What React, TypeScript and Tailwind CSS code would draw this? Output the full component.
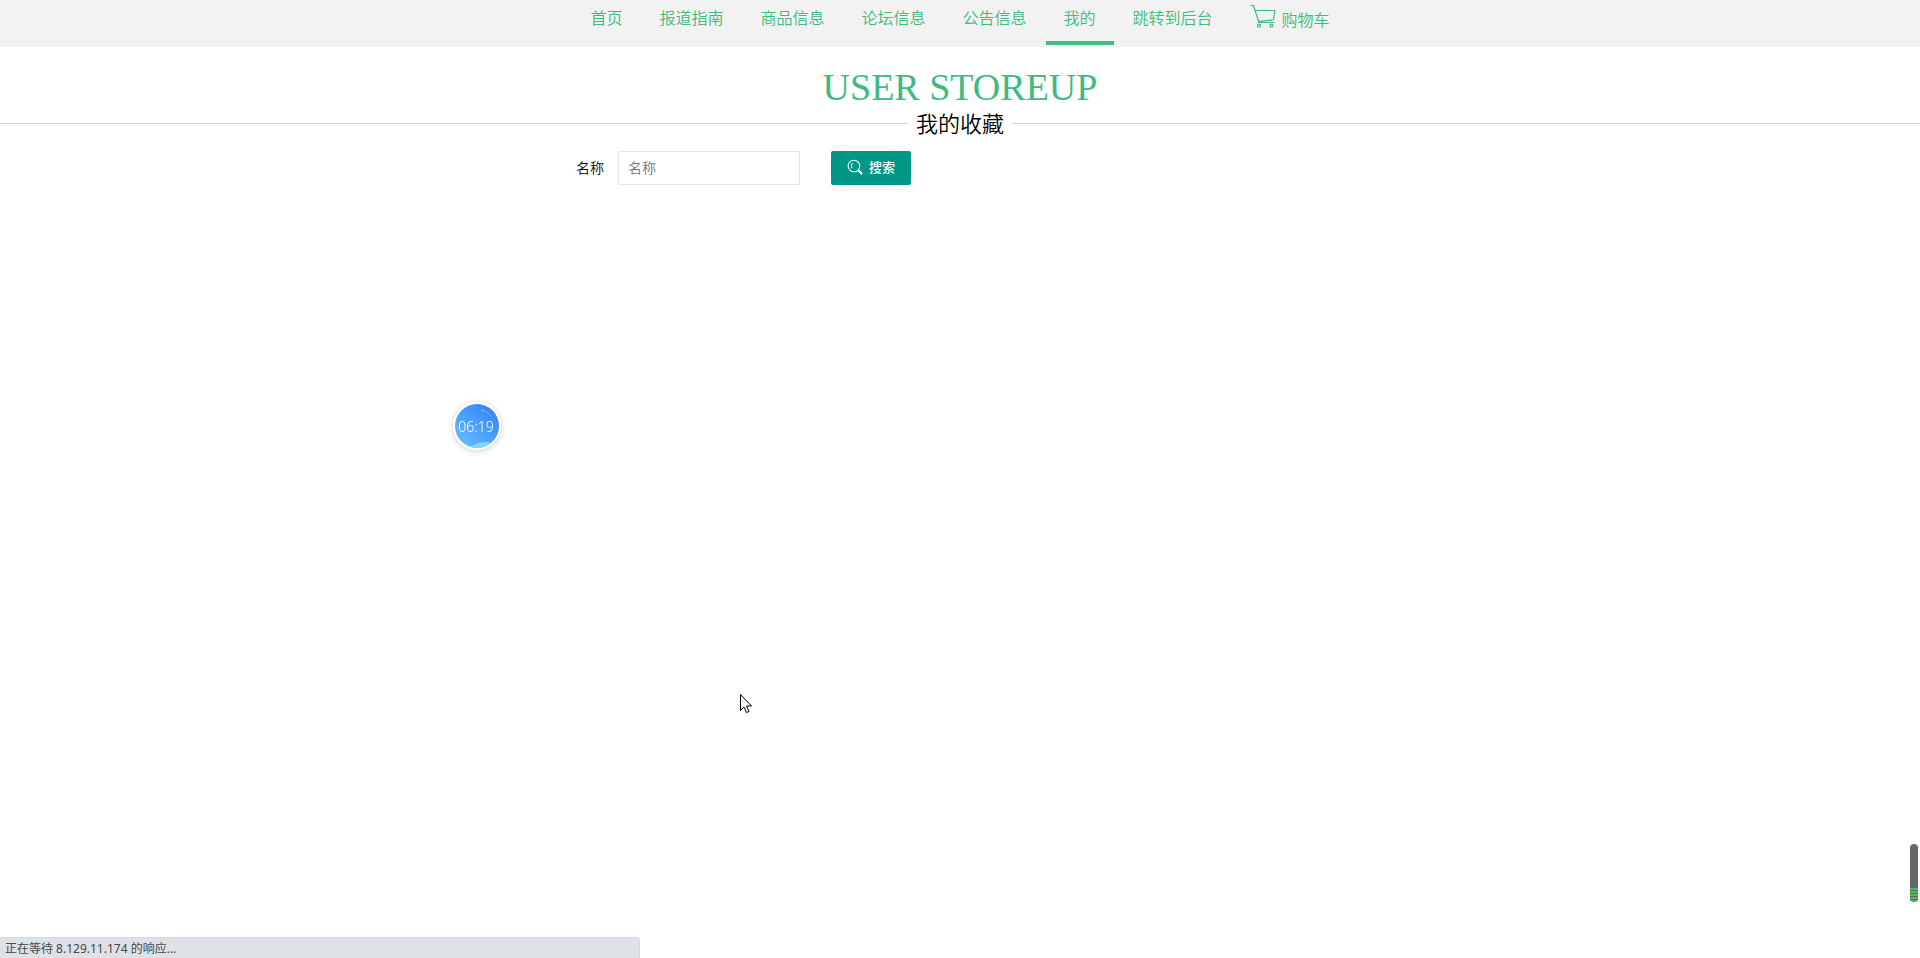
import { FormEvent, useState } from "react"

//ナビゲーションの項目
const navItems = ["首页", "报道指南", "商品信息", "论坛信息", "公告信息", "我的", "跳转到后台"]

const CartIcon = () => (
  <svg width="26" height="24" viewBox="0 0 26 24" fill="none" stroke="currentColor" strokeWidth="1.2" strokeLinejoin="round" strokeLinecap="round">
    <path d="M0.800 1.500h2.700l5.500 17h15" />
    <path d="M5 6.500h20l-1.500 8.500q-.2 1-1.200 1.100l-13.800 1.200" />
    <circle cx="9" cy="21.700" r="1.500" />
    <circle cx="21.500" cy="21.700" r="1.500" />
  </svg>
)

const SearchIcon = () => (
  <svg width="16" height="16" viewBox="0 0 16 16" fill="none" stroke="currentColor" strokeLinecap="round">
    <circle cx="7" cy="7" r="5.800" strokeWidth="1.100" />
    <path d="M5.600 4.200C4.200 5.200 4 7.600 5 9" strokeWidth="1" />
    <path d="M11.600 11.600l2.800 2.800" strokeWidth="2.200" />
  </svg>
)

const Header = () => (
  <nav className="flex h-[47px] items-start justify-center gap-px bg-[#f2f2f2] text-base text-[#3dbb80]">
    {navItems.map((item) => (
      <a
        key={item}
        href="#"
        className={
          item === "我的"
            ? "h-[45px] border-b-4 border-[#3dbb80] px-[18px] leading-9"
            : "h-[45px] px-[18px] leading-9"
        }
      >
        {item}
      </a>
    ))}
    <a href="#" className="flex h-[45px] gap-1.5 px-[18px] leading-10">
      <span className="pt-1"><CartIcon /></span>
      购物车
    </a>
  </nav>
)

//画面に浮かぶタイマー
const Timer = () => (
  <div className="fixed top-[402px] left-[453px] size-12 overflow-hidden rounded-full border-2 border-white shadow-[0_1px_6px_rgba(0,0,0,0.2)]">
    <svg className="absolute inset-0 size-full" viewBox="0 0 44 44">
      <defs>
        <linearGradient id="sky" x1="0.1" y1="0.9" x2="0.8" y2="0.1">
          <stop offset="0" stopColor="#64bdfb" />
          <stop offset="1" stopColor="#3586fb" />
        </linearGradient>
      </defs>
      <rect width="44" height="44" fill="url(#sky)" />
      <path d="M14 42c6-1 9-4 15-4 4 0 6 1 9 0v6H12z" fill="#7fd5fb" />
      <path d="M26 6q6 1 10 6" stroke="#8fc2ff" strokeWidth="1" fill="none" strokeDasharray="4 1" />
    </svg>
    <span className="relative block pr-0.5 text-center font-['Noto_Sans'] text-sm leading-[46px] font-light text-white">06:19</span>
  </div>
)

const App = () => {
  const [name, setName] = useState("")

  const handleSearch = (e: FormEvent) => {
    e.preventDefault()
  }

  return (
    <div className="min-h-screen bg-white font-['Noto_Sans','Noto_Sans_CJK_SC',sans-serif] font-[350] text-black">
      <Header />
      <header className="pt-4 text-center">
        <p className="font-['Liberation_Serif',serif] text-[38px] leading-12 text-[#3dbb80]">USER STOREUP</p>
        <div className="flex items-center gap-2">
          <span className="h-px flex-1 bg-[#d2d2d2]" />
          <h1 className="text-[22px] leading-6 font-[350]">我的收藏</h1>
          <span className="h-px flex-1 bg-[#d2d2d2]" />
        </div>
      </header>

      <form onSubmit={handleSearch} className="mx-auto mt-4 flex max-w-3xl items-center text-sm">
        <label htmlFor="name" className="mr-[14px]">名称</label>
        <input
          id="name"
          type="text"
          placeholder="名称"
          value={name}
          onChange={(e) => setName(e.target.value)}
          className="h-[34px] w-[182px] border border-[#e6e6e6] px-[9px] pb-0.5 outline-none placeholder:text-[#757575]"
        />
        <button type="submit" className="ml-[31px] flex h-[34px] w-20 items-center justify-center gap-1.5 rounded-xs bg-[#009688] pb-0.5 text-[13px] font-medium text-white">
          <SearchIcon />
          搜索
        </button>
      </form>

      <Timer />

      {/* マウスカーソル */}
      <svg className="fixed top-[693px] left-[739px]" width="14" height="21" viewBox="0 0 14 21">
        <path d="M1.500 1.500v16l3.500-3.500 2.500 5.500 2.500-1-2.500-5.500h5z" fill="white" stroke="black" />
      </svg>

      {/* 右端のメーター */}
      <div className="fixed right-[2px] bottom-14 flex h-[58px] w-2 flex-col justify-end overflow-hidden rounded-full bg-[#666666] shadow-sm">
        <div className="h-[14px] bg-[repeating-linear-gradient(to_bottom,#4fb86a_0_2px,#5a6b5e_2px_3px)]" />
      </div>

      <div className="fixed bottom-0 left-0 h-[21px] w-1/3 rounded-tr border-t border-r border-[#d5d8de] bg-[#dee1e6] pl-[5px] text-xs leading-[21px] font-normal text-[#45484c]">
        正在等待 8.129.11.174 的响应...
      </div>
    </div>
  )
}

export default App
